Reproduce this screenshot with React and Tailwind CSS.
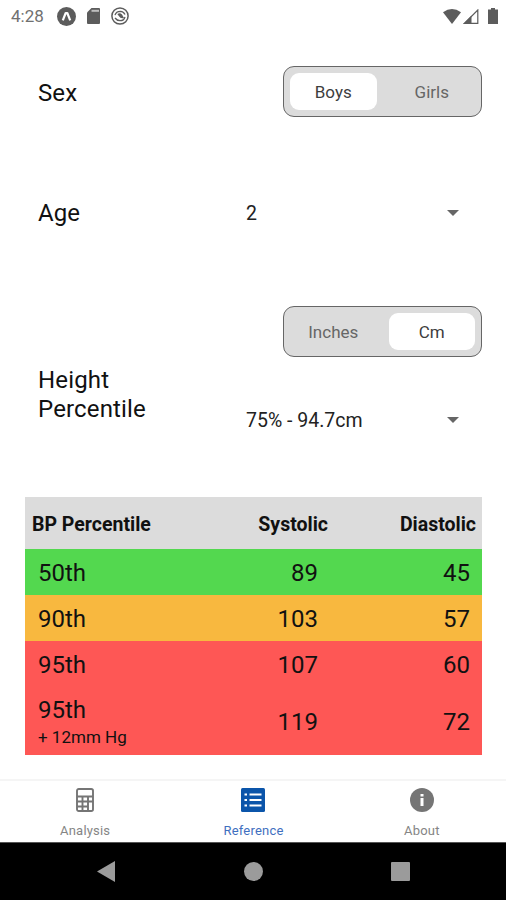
import { useState } from "react";
import clsx from "clsx";

const ROWS = Object.freeze([
  { label: "50th", systolic: 89, diastolic: 45, color: "bg-[#53d84f]" },
  { label: "90th", systolic: 103, diastolic: 57, color: "bg-[#f8b83f]" },
  { label: "95th", systolic: 107, diastolic: 60, color: "bg-[#fe5755]" },
  { label: "95th", note: "+ 12mm Hg", systolic: 119, diastolic: 72, color: "bg-[#fe5755]" },
]);

// Status bar
const StatusBar = () => (
  <div className="flex h-8 shrink-0 items-center pl-[11px] pr-2 text-[#5c5c5c]">
    <span className="w-[46px] text-[17px] leading-8 text-[#707070]">4:28</span>
    <svg className="h-[19px] w-[19px]" viewBox="0 0 19 19">
      <circle cx="9.5" cy="9.5" r="9.5" fill="currentColor" />
      <path d="M5.800 13.300 8.700 6h1.600L13.200 13.300" fill="none" stroke="white" strokeWidth="2.200" strokeLinejoin="round" />
    </svg>
    <svg className="ml-[11px] h-4 w-[13px]" viewBox="0 0 13 16">
      <path d="M4.500 0H12q1 0 1 1v14q0 1-1 1H1q-1 0-1-1V4.500z" fill="currentColor" />
      <path d="M4.500 2.800H12" stroke="white" strokeWidth="2" opacity=".6" />
    </svg>
    <svg className="ml-[11px] h-[18px] w-[18px]" viewBox="0 0 18 18" fill="none" stroke="currentColor">
      <circle cx="9" cy="9" r="8.100" strokeWidth="1.500" />
      <path d="M4 8.200Q5 4.300 9.500 4.300 12.500 4.500 14 7.500M14 10Q13 13.700 9 13.700 6 13.700 4 11" strokeWidth="1.300" />
      <path d="M6.300 7Q9 5.500 11 7.500L13 11Q9.500 12 8 9.200z" fill="currentColor" stroke="none" />
    </svg>
    <svg className="ml-auto h-[15px] w-[18px]" viewBox="0 0 18 15">
      <path d="M0 3.200Q9-3 18 3.200L9 15z" fill="currentColor" />
    </svg>
    <svg className="ml-[2px] h-[15px] w-[16px]" viewBox="0 0 16 15">
      <path d="M1.500 14.300H14.800V1z" fill="none" stroke="currentColor" strokeWidth="1.200" />
      <path d="M0 15 8.500 6.500V15z" fill="currentColor" />
    </svg>
    <svg className="ml-[9px] h-4 w-[10px]" viewBox="0 0 10 16">
      <path d="M3 0h4v1.500h3V16H0V1.500h3z" fill="currentColor" />
    </svg>
  </div>
);

const Segmented = ({ options, value, onChange }) => (
  <div className="flex h-[51px] w-[199px] items-center gap-[12px] rounded-[11px] border border-[#666] bg-[#dcdcdc] px-[6px]">
    {options.map((option) => (
      <button
        key={option}
        type="button"
        onClick={() => onChange(option)}
        className={clsx(
          "h-[37px] flex-1 rounded-[9px] pt-[2px] text-[17px]",
          option === value ? "bg-white text-[#3d3d3d]" : "text-[#666]"
        )}
      >
        {option}
      </button>
    ))}
  </div>
);

const Picker = ({ value }) => (
  <button type="button" className="flex h-8 w-[213px] items-center justify-between text-[19.5px] text-[#222]">
    <span className="pt-[2px]">{value}</span>
    <svg className="h-[6px] w-[12px]" viewBox="0 0 12 6">
      <path d="M0 0h12L6 6z" fill="#666" />
    </svg>
  </button>
);

const CalculatorIcon = () => (
  <svg className="h-6 w-[18px]" viewBox="0 0 18 24" fill="none" stroke="currentColor" strokeWidth="1.900">
    <rect x="1" y="1" width="16" height="22" rx="1.800" />
    <path d="M1 8.500h16M1 13.500h16M1 18.500h11.500M6.500 8.500V23M12 8.500V23" />
  </svg>
);

const ListIcon = () => (
  <svg className="h-6 w-6" viewBox="0 0 24 24">
    <rect width="24" height="24" rx="1.500" fill="currentColor" />
    <path
      d="M3.500 6.500H6M8.500 6.500h12M3.500 12H6M8.500 12h12M3.500 17.500H6M8.500 17.500h12"
      stroke="white"
      strokeWidth="2"
    />
  </svg>
);

const InfoIcon = () => (
  <svg className="h-6 w-6" viewBox="0 0 24 24">
    <circle cx="12" cy="12" r="12" fill="currentColor" />
    <path d="M10.500 6h3v2.500h-3zM10.500 10h3v8h-3z" fill="white" />
  </svg>
);

const TABS = [
  { label: "Analysis", Icon: CalculatorIcon },
  { label: "Reference", Icon: ListIcon },
  { label: "About", Icon: InfoIcon },
];

export default function App() {
  const [sex, setSex] = useState("Boys");
  const [unit, setUnit] = useState("Cm");
  const [tab, setTab] = useState("Reference");

  return (
    <div className="flex h-[900px] w-[506px] flex-col overflow-hidden bg-white font-[Roboto,sans-serif] text-[#111]">
      <StatusBar />

      {/* Inputs */}
      <div className="flex h-[465px] shrink-0 flex-col pl-[38px] pr-6 pt-[34px] text-2xl">
        <div className="flex h-[51px] items-center justify-between">
          <span className="pt-[3px] tracking-[0.1px]">Sex</span>
          <Segmented options={["Boys", "Girls"]} value={sex} onChange={setSex} />
        </div>
        <div className="mt-20 flex h-8 items-center justify-between pr-[23px]">
          <span>Age</span>
          <Picker value="2" />
        </div>
        <div className="mt-[77px] flex justify-between">
          <div className="pt-[60px] leading-[28.500px] tracking-[0.150px]">
            Height
            <br />
            Percentile
          </div>
          <div className="flex flex-col items-end">
            <Segmented options={["Inches", "Cm"]} value={unit} onChange={setUnit} />
            <div className="mt-[47px] pr-[23px]">
              <Picker value="75% - 94.7cm" />
            </div>
          </div>
        </div>
      </div>

      {/* Percentile table */}
      <table className="mx-[25px] w-[457px] shrink-0 table-fixed border-collapse">
        <thead>
          <tr className="h-[52px] bg-[#dcdcdc] text-[19.500px]">
            <th className="w-[152px] whitespace-nowrap pl-[7px] pt-[3px] text-left font-bold">BP Percentile</th>
            <th className="w-[152px] pr-[1px] pt-[3px] text-right font-bold">Systolic</th>
            <th className="pr-[6px] pt-[3px] text-right font-bold">Diastolic</th>
          </tr>
        </thead>
        <tbody>
          {ROWS.map((row, index) => (
            <tr key={index} className={clsx(row.color, "text-2xl", row.note ? "h-[68px]" : "h-[46px]")}>
              <td className={clsx("pl-[13px]", row.note ? "pt-[5px]" : "pt-[2px]")}>
                <div className="leading-[28px]">{row.label}</div>
                {row.note && <div className="text-[17px] leading-[27px]">{row.note}</div>}
              </td>
              <td className="pr-[11px] pt-[2px] text-right">{row.systolic}</td>
              <td className="pr-[12px] pt-[2px] text-right">{row.diastolic}</td>
            </tr>
          ))}
        </tbody>
      </table>

      {/* Bottom tabs */}
      <nav className="mt-auto flex h-[63px] shrink-0 border-t-2 border-[#f5f5f5] pl-[1px]">
        {TABS.map(({ label, Icon }) => (
          <button
            key={label}
            type="button"
            onClick={() => setTab(label)}
            className={clsx(
              "flex flex-1 flex-col items-center pt-[7px]",
              label === tab ? "text-[#0b55aa]" : "text-[#757575]"
            )}
          >
            <Icon />
            <span
              className={clsx(
                "mt-[11px] text-[13px] leading-4 tracking-[0.2px]",
                label === tab ? "text-[#3f6fc0]" : "text-[#858585]"
              )}
            >
              {label}
            </span>
          </button>
        ))}
      </nav>

      {/* System navigation */}
      <div className="flex h-[58px] shrink-0 items-center justify-between border-t border-[#555] bg-black pl-[97px] pr-[96px]">
        <svg className="h-[21px] w-[18px]" viewBox="0 0 18 21">
          <path d="M18 0v21L0 10.500z" fill="#9b9b9b" />
        </svg>
        <div className="h-[19px] w-[19px] rounded-full bg-[#9b9b9b]" />
        <div className="h-[19px] w-[19px] rounded-[1px] bg-[#9b9b9b]" />
      </div>
    </div>
  );
}
